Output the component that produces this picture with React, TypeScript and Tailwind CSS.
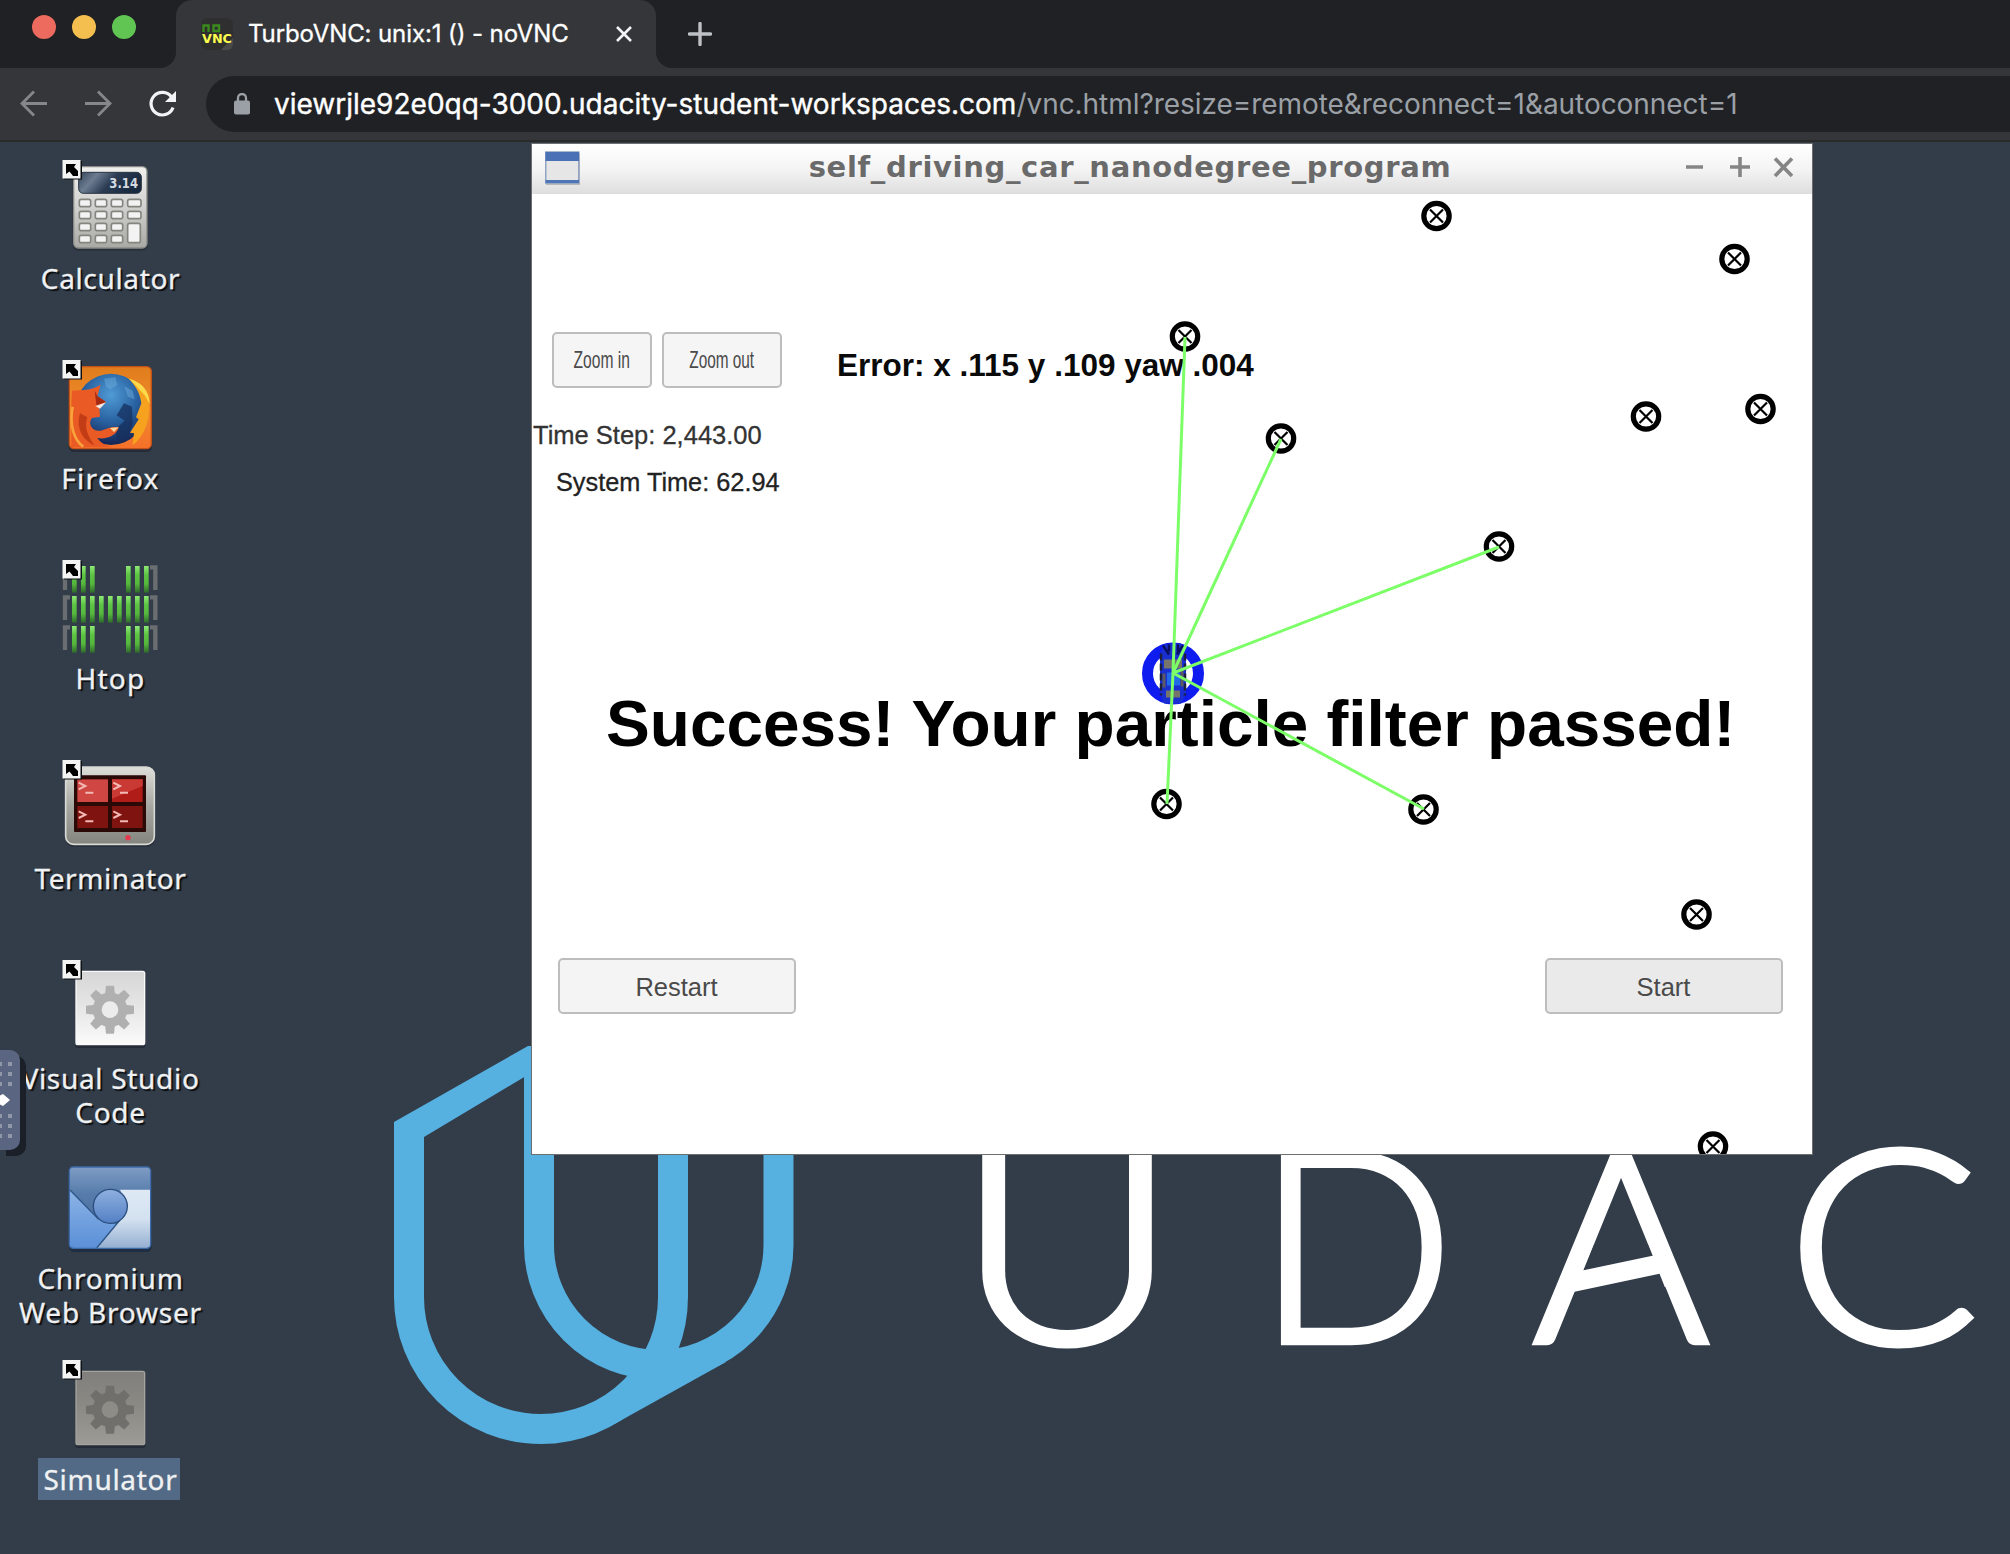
import React from "react";

const SANS = "font-['Liberation_Sans',Arial,sans-serif]";

/* ---------- Browser chrome ---------- */

function Favicon() {
  return (
    <svg width="32" height="32" viewBox="0 0 32 32" className="shrink-0">
      <defs>
        <linearGradient id="fav" x1="0" y1="0" x2="1" y2="1">
          <stop offset="0.8" stopColor="#2f2f2f" />
          <stop offset="0.82" stopColor="#4a4a4a" />
        </linearGradient>
      </defs>
      <rect width="32" height="32" rx="6" fill="url(#fav)" />
      <path d="M2.500 14V7.500H7.500V14M12.500 7.500H18V13H12.500Z" fill="none" stroke="#3b8a1d" strokeWidth="2.400" />
      <text x="1" y="24.500" fontSize="11.500" fontWeight="700" fontFamily="DejaVu Sans" fill="#ffff4d" textLength="30" lengthAdjust="spacingAndGlyphs">
        VNC
      </text>
    </svg>
  );
}

function TabStrip() {
  return (
    <div className="flex h-[68px] bg-[#202124]">
      <div className="flex w-[160px] shrink-0 gap-4 pt-[15px] pl-8">
        <span className="size-6 rounded-full bg-[#ec6a5e]" />
        <span className="size-6 rounded-full bg-[#f4bf4f]" />
        <span className="size-6 rounded-full bg-[#61c554]" />
      </div>
      <div className="w-4 bg-[#35363a]">
        <div className="h-full rounded-br-[16px] bg-[#202124]" />
      </div>
      <div className="flex w-[480px] items-center rounded-t-[16px] bg-[#35363a] pl-[25px]">
        <Favicon />
        <span className="ml-[15px] w-[368px] whitespace-nowrap font-[Inter,sans-serif] text-[24px] leading-[32px] tracking-[-0.1px] text-white [-webkit-text-stroke:0.3px_#fff]">
          TurboVNC: unix:1 () - noVNC
        </span>
        <svg width="16" height="16" viewBox="0 0 16 16">
          <path d="M1 1L15 15M15 1L1 15" stroke="#f1f3f4" strokeWidth="2.600" />
        </svg>
      </div>
      <div className="w-4 bg-[#35363a]">
        <div className="h-full rounded-bl-[16px] bg-[#202124]" />
      </div>
      <svg width="24" height="24" viewBox="0 0 24 24" className="mt-[22px] ml-4">
        <path d="M12 1.500V22.500M1.500 12H22.500" stroke="#bdc1c6" strokeWidth="3.400" strokeLinecap="round" />
      </svg>
    </div>
  );
}

function Toolbar() {
  return (
    <div className="flex h-[74px] items-center border-b-2 border-[#2a2a2b] bg-[#35363a]">
      <svg width="206" height="72" viewBox="0 0 206 72" className="shrink-0">
        <g fill="none" strokeWidth="2.800">
          <path d="M47 35.500H22M34 23.500L22 35.500L34 47.500" stroke="#85878a" />
          <path d="M85 35.500H110M98 23.500L110 35.500L98 47.500" stroke="#85878a" />
          <path d="M171.500 29A11.300 11.300 0 1 0 173 39.500" stroke="#f1f3f4" strokeWidth="3.200" />
        </g>
        <path d="M176 23V34H165Z" fill="#f1f3f4" />
      </svg>
      <div className="flex h-14 flex-1 items-center rounded-l-full bg-[#202124] pl-[28px]">
        <svg width="16" height="22" viewBox="0 0 16 22" className="mb-px shrink-0">
          <rect y="7.500" width="16" height="14" rx="2" fill="#9aa0a6" />
          <path d="M4 9V5A4 4 0 0 1 12 5V9" fill="none" stroke="#9aa0a6" strokeWidth="2.300" />
        </svg>
        <span className="ml-6 whitespace-nowrap font-[Inter,sans-serif] text-[28px] leading-[36px] text-[#9aa0a6]">
          <span className="text-white [-webkit-text-stroke:0.4px_#fff]">viewrjle92e0qq-3000.udacity-student-workspaces.com</span>
          <span className="tracking-[-0.05px]">/vnc.html?resize=remote&amp;reconnect=1&amp;autoconnect=1</span>
        </span>
      </div>
    </div>
  );
}

/* ---------- Desktop icons ---------- */

function Emblem() {
  return (
    <g>
      <rect x="64" y="161" width="18" height="18.500" fill="#0d1013" />
      <rect x="62.500" y="160" width="18" height="18.500" fill="#f4f4f4" />
      <path d="M66 164H76L74 167L78 171V176H73L69.500 171.500L66 174Z" fill="#000" />
    </g>
  );
}

function CalculatorArt() {
  const cols = [238, 286, 334];
  const rows = [178, 214, 250, 286];
  return (
    <g transform="translate(0 140) scale(0.33333)">
      <rect x="218" y="84" width="226" height="248" rx="16" fill="#20262d" opacity="0.5" />
      <rect x="221" y="80" width="220" height="244" rx="14" fill="url(#calcBody)" stroke="#8a8a88" strokeWidth="4" />
      <rect x="236" y="97" width="188" height="63" rx="14" fill="url(#calcLcd)" stroke="#2b3440" strokeWidth="3" />
      <text x="328" y="144" fontSize="40" fontWeight="700" fontFamily="DejaVu Sans" fill="#d4dae0" textLength="86" lengthAdjust="spacingAndGlyphs">
        3.14
      </text>
      <g fill="#f3f3f3" stroke="#85857f" strokeWidth="5">
        {rows.map((y) => cols.map((x) => <rect key={`${x}-${y}`} x={x} y={y} width="34" height="22" rx="6" />))}
        <rect x="383" y="178" width="40" height="22" rx="6" />
        <rect x="383" y="214" width="40" height="22" rx="6" />
        <rect x="383" y="250" width="38" height="58" rx="6" />
      </g>
    </g>
  );
}

function FirefoxArt() {
  return (
    <g transform="translate(0 -60) scale(0.33333)">
      <rect x="206" y="684" width="250" height="252" rx="16" fill="#1c222b" opacity="0.6" />
      <rect x="208" y="680" width="246" height="246" rx="14" fill="url(#ffBg)" stroke="#c4501a" strokeWidth="4" />
      <ellipse cx="333" cy="808" rx="106" ry="107" fill="url(#ffGlobe)" />
      <path d="M372 790L396 800L398 850L384 890L352 904L346 868L374 842L350 826Z" fill="#152f5c" opacity="0.75" />
      <path d="M312 716L346 712L352 736L330 748L318 740ZM372 738L398 752L404 778L384 770Z" fill="#6fb0de" opacity="0.45" />
      <path d="M384 714C420 728 448 756 447 800C448 850 430 890 398 916L402 880L390 878L416 838L408 832L424 790C420 760 408 738 384 714Z" fill="#f6a21f" />
      <path d="M388 716C424 726 448 750 449 792L434 766Z" fill="#fbd94a" />
      <path d="M216 752L250 750C270 748 286 744 302 734L292 768L318 786L298 802L300 830L276 834C262 850 276 876 302 872C322 868 330 858 356 862C352 886 318 900 292 894C302 910 320 916 336 922L214 922V790Z" fill="#ea5a24" />
      <path d="M284 752L292 768L318 786L290 802Z" fill="#a62a12" />
      <path d="M286 798L318 787L300 806Z" fill="#f6e8e0" />
      <path d="M240 820C228 860 244 900 284 916C262 888 252 860 262 832Z" fill="#c23d15" />
      <path d="M218 800C208 850 220 900 250 920" fill="none" stroke="#f9a13a" strokeWidth="8" />
      <path d="M330 864L356 862L342 876Z" fill="#fbd9a0" />
    </g>
  );
}

function HtopArt() {
  const side = [216, 243, 270, 378, 405, 432];
  const mid = [297, 324, 351];
  return (
    <g transform="translate(0 140) scale(0.33333)">
      {[78, 168, 258].map((y) => (
        <g key={y}>
          <path d={`M210 ${y + 4}H195V${y + 72}`} fill="none" stroke="#6a6e70" strokeWidth="13" />
          <path d={`M450 ${y + 4}H466V${y + 72}`} fill="none" stroke="#6a6e70" strokeWidth="13" />
          {(y === 168 ? [...side, ...mid] : side).map((x) => (
            <rect key={x} x={x} y={y} width="14" height="80" fill="url(#bar)" />
          ))}
        </g>
      ))}
    </g>
  );
}

function TerminatorArt() {
  return (
    <g transform="translate(0 -60) scale(0.33333)">
      <rect x="196" y="684" width="270" height="236" rx="26" fill="#1c222b" opacity="0.6" />
      <rect x="197" y="681" width="266" height="232" rx="24" fill="url(#termBody)" stroke="#d8d8d4" strokeWidth="5" />
      <rect x="222" y="706" width="216" height="170" rx="3" fill="#2a0907" />
      <rect x="232" y="718" width="92" height="68" fill="#cf4642" />
      <rect x="336" y="718" width="92" height="68" fill="#b01c17" />
      <path d="M336 718H428V738L336 776Z" fill="#c93a35" />
      <rect x="232" y="798" width="92" height="66" fill="#7e130f" />
      <rect x="336" y="798" width="92" height="66" fill="#7e130f" />
      <g fill="none" stroke="#f2b8b4" strokeWidth="6">
        {[232, 336].map((x) =>
          [738, 824].map((y) => (
            <path key={`${x}-${y}`} d={`M${x + 4} ${y - 10}L${x + 24} ${y}L${x + 4} ${y + 10}M${x + 24} ${y + 20}H${x + 48}`} />
          )),
        )}
      </g>
      <circle cx="384" cy="893" r="8" fill="#e8384f" />
    </g>
  );
}

const TEETH = [0, 45, 90, 135, 180, 225, 270, 315];

function GearSheet({ dim }: { dim?: boolean }) {
  const gear = dim ? "#706f6b" : "#b0b0b0";
  const hole = dim ? "#8d8c87" : "#ececec";
  return (
    <g transform="translate(0 140) scale(0.33333)">
      <rect x="226" y="98" width="210" height="226" rx="8" fill="#1c222b" opacity="0.6" />
      <rect x="228" y="94" width="206" height="220" rx="6" fill={dim ? "url(#sheetDim)" : "url(#sheet)"} stroke={dim ? "#a5a49e" : "#fafafa"} strokeWidth="4" />
      <g transform="translate(330 209)">
        {TEETH.map((a) => (
          <path key={a} transform={`rotate(${a})`} d="M-12 -72H12L15 -44H-15Z" fill={gear} />
        ))}
        <circle r="52" fill={gear} />
        <circle r="25" fill={hole} />
      </g>
    </g>
  );
}

function ChromiumArt() {
  return (
    <g transform="translate(0 -60) scale(0.33333)">
      <rect x="208" y="686" width="246" height="250" rx="14" fill="#162740" opacity="0.7" />
      <clipPath id="crClip">
        <rect x="208" y="681" width="244" height="244" rx="12" />
      </clipPath>
      <g clipPath="url(#crClip)">
        <rect x="208" y="681" width="244" height="244" fill="url(#crTop)" />
        <path d="M208 748L296 836L330 852L350 852L290 926H208Z" fill="url(#crLeft)" />
        <path d="M290 926L358 842L384 798L360 749H454V926Z" fill="url(#crRight)" />
        <path d="M210 750L296 838M290 924L360 840" stroke="#2f5688" strokeWidth="4" />
        <circle cx="331" cy="799" r="51" fill="url(#crDot)" stroke="#2c4f80" strokeWidth="4" />
      </g>
      <rect x="208" y="681" width="244" height="244" rx="12" fill="none" stroke="#3d6ba8" strokeWidth="4" />
    </g>
  );
}

function Gradient({ id, stops }: { id: string; stops: string[] }) {
  return (
    <linearGradient id={id} x1="0" y1="0" x2="0" y2="1">
      {stops.map((c, i) => (
        <stop key={i} offset={i / (stops.length - 1)} stopColor={c} />
      ))}
    </linearGradient>
  );
}

function SharedGradients() {
  return (
    <svg width="0" height="0" className="absolute">
      <defs>
        <Gradient id="calcBody" stops={["#f0f0ee", "#d0d0ce", "#a8a8a4"]} />
        <linearGradient id="calcLcd" x1="0" y1="0" x2="1" y2="0.3">
          <stop offset="0" stopColor="#33455c" />
          <stop offset="0.3" stopColor="#6d7c90" />
          <stop offset="0.6" stopColor="#2a3b52" />
          <stop offset="1" stopColor="#1a2a40" />
        </linearGradient>
        <Gradient id="ffBg" stops={["#e07c1c", "#f08c2c", "#f4702a"]} />
        <radialGradient id="ffGlobe" cx="0.5" cy="0.3" r="0.7">
          <stop offset="0" stopColor="#4f9bd6" />
          <stop offset="0.55" stopColor="#28609f" />
          <stop offset="1" stopColor="#142452" />
        </radialGradient>
        <Gradient id="bar" stops={["#8fea76", "#5cc443", "#55b83d", "#2f6a2c"]} />
        <Gradient id="termBody" stops={["#dededa", "#a8a8a2", "#85857f"]} />
        <Gradient id="sheet" stops={["#d6d6d6", "#e6e6e6", "#fbfbfb"]} />
        <Gradient id="sheetDim" stops={["#807f7b", "#8b8a85", "#9c9b95"]} />
        <Gradient id="crTop" stops={["#7f9cc4", "#567cab", "#4d719f", "#44699a"]} />
        <Gradient id="crLeft" stops={["#8db4e6", "#5a8fd8"]} />
        <Gradient id="crRight" stops={["#dfe9f5", "#d3e1f0", "#94aed0"]} />
        <Gradient id="crDot" stops={["#8fb0e0", "#5380c4"]} />
      </defs>
    </svg>
  );
}

type Shortcut = { lines: string[]; art: React.ReactNode; selected?: boolean; plain?: boolean; track: string };

const SHORTCUTS: Shortcut[] = [
  { lines: ["Calculator"], art: <CalculatorArt />, track: "tracking-[0.65px]" },
  { lines: ["Firefox"], art: <FirefoxArt />, track: "tracking-[1.3px]" },
  { lines: ["Htop"], art: <HtopArt />, track: "tracking-[1.3px]" },
  { lines: ["Terminator"], art: <TerminatorArt />, track: "tracking-[0.6px]" },
  { lines: ["Visual Studio", "Code"], art: <GearSheet />, track: "tracking-[0.7px]" },
  { lines: ["Chromium", "Web Browser"], art: <ChromiumArt />, plain: true, track: "tracking-[0.8px]" },
  { lines: ["Simulator"], art: <GearSheet dim />, selected: true, track: "tracking-[0.7px]" },
];

function DesktopIcon({ item }: { item: Shortcut }) {
  return (
    <div className="flex h-[200px] flex-col items-center">
      <svg width="100" height="100" viewBox="60 155 100 100" className="shrink-0">
        {item.art}
        {!item.plain && <Emblem />}
      </svg>
      <div
        className={
          "flex flex-col items-center whitespace-nowrap font-['Noto_Sans',sans-serif] text-[28px] leading-[34px] text-[#f0f1f2] [-webkit-text-stroke:0.3px_#f0f1f2] " +
          item.track +
          (item.selected
            ? " mt-[3px] mr-[2px] w-[142px] bg-[#526a85] pt-[4px] pb-1 pl-[3px]"
            : " mt-[6px] pl-[1px] [text-shadow:2px_2px_1px_#0b0e12]")
        }
      >
        {item.lines.map((l) => (
          <span key={l}>{l}</span>
        ))}
      </div>
    </div>
  );
}

/* ---------- Wallpaper ---------- */

function Wallpaper() {
  return (
    <svg width="2010" height="1412" viewBox="0 142 2010 1412" className="absolute top-0 left-0">
      <g fill="none" stroke="#56b0e0" strokeWidth="30">
        <path d="M409 1130V1297A132 132 0 0 0 673 1297V1100" />
        <path d="M539 1066V1245A119.750 119.750 0 0 0 778.500 1245V1100" />
      </g>
      <path d="M394 1122L528 1046H531V1073L424 1137V1140H394Z" fill="#56b0e0" />
      <path d="M614.500 1424L726 1362L700 1350L672 1362L640 1390L600 1415Z" fill="#56b0e0" />
      <g fill="#fff" stroke="#fff" strokeWidth="6.500" fontFamily="Lato" fontWeight="300" fontSize="266">
        <text x="957" y="1343" fontSize="268" textLength="220" lengthAdjust="spacingAndGlyphs">U</text>
        <text x="1257" y="1342" textLength="197" lengthAdjust="spacingAndGlyphs">D</text>
        <text x="1533" y="1342" textLength="176" lengthAdjust="spacingAndGlyphs">A</text>
        <text x="1787" y="1343" fontSize="270" textLength="192" lengthAdjust="spacingAndGlyphs">C</text>
      </g>
      <path d="M1594 1245H1648L1670 1300H1572Z" fill="#323d49" />
      <path d="M1580 1271L1656 1255L1663 1273L1571 1292.500Z" fill="#fff" />
    </svg>
  );
}

function PanelHandle() {
  return (
    <div className="absolute top-[908px] left-0 h-[100px] w-5 rounded-r-[10px] bg-[#5a6681] shadow-[6px_6px_0_#1a1f28]">
      <svg width="20" height="100" viewBox="0 0 20 100">
        {[12, 22, 32, 64, 74, 84].map((y) => (
          <g key={y} fill="#8f97a8">
            <rect x="-2" y={y} width="4" height="4" />
            <rect x="8" y={y} width="4" height="4" />
          </g>
        ))}
        <path d="M0 45.500L3 44L10 50L3 56L0 54.500Z" fill="#fff" />
      </svg>
    </div>
  );
}

/* ---------- Simulator window ---------- */

const LANDMARKS = [
  [1436.5, 216],
  [1734.5, 259],
  [1185, 336.5],
  [1281, 438.5],
  [1646, 416.5],
  [1760.5, 409],
  [1499, 546.5],
  [1166.5, 804],
  [1423.5, 809.5],
  [1696.5, 914.5],
  [1713, 1146.5],
];

const SIGHTED = [
  [1185, 337],
  [1281, 439],
  [1499, 547],
  [1167, 804],
  [1424, 809],
];

function Landmarks() {
  return (
    <svg width="1280" height="961" viewBox="532 194 1280 961" className="absolute top-0 left-0">
      {LANDMARKS.map(([x, y]) => (
        <g key={`${x}-${y}`} transform={`translate(${x} ${y})`} fill="none" stroke="#000">
          <circle r="12.700" strokeWidth="5.200" />
          <path d="M-6.500 -6.500L6.500 6.500M6.500 -6.500L-6.500 6.500" strokeWidth="2.200" />
        </g>
      ))}
      <g transform="translate(1173 673.500)">
        <circle r="25.500" fill="none" stroke="#0f1cf0" strokeWidth="11" />
        <path d="M-13 -18L-9 -29L8 -30L13 -18V20L8 30H-9L-13 20Z" fill="#1a2fd0" />
        <path d="M-12 -20V22M12 -20V22" stroke="#1b1f3a" strokeWidth="2.500" strokeDasharray="7 3" />
        <path d="M-10 -28L-4 -19M10 -28L4 -19M-4 -29V-22M5 -29V-22" stroke="#0a0f60" strokeWidth="2.500" />
        <rect x="-9" y="-14" width="18" height="9" fill="#77746c" />
        <rect x="-7" y="17" width="14" height="7" fill="#77746c" />
        <path d="M-9 0V14M9 -3V13" stroke="#5a5a60" strokeWidth="3" />
        <rect x="-6" y="-1" width="13" height="13" fill="#1f6be8" />
      </g>
    </svg>
  );
}

function SightLines() {
  return (
    <svg width="1280" height="961" viewBox="532 194 1280 961" className="absolute top-0 left-0">
      {SIGHTED.map(([x, y]) => (
        <path key={`${x}-${y}`} d={`M1173 673L${x} ${y}`} stroke="#7dff68" strokeWidth="3" />
      ))}
    </svg>
  );
}

function TitleBar() {
  return (
    <div className="flex h-[50px] items-center bg-linear-to-b from-white via-[#f4f4f4] to-[#dedede] pl-[13px]">
      <svg width="35" height="34" viewBox="0 0 35 34" className="mb-[3px] shrink-0">
        <rect x="1" y="2" width="34" height="32" fill="#b8b8b8" />
        <rect x="0.750" y="1" width="33" height="31" fill="#e6e6e6" stroke="#8fa3c4" strokeWidth="1.500" />
        <rect x="0.500" y="1" width="33.500" height="9" fill="#4a70b5" />
        <rect x="0.500" y="29" width="33.500" height="3" fill="#4f77b8" />
      </svg>
      <div className="ml-[9px] flex w-[1082px] shrink-0 justify-center font-['DejaVu_Sans',sans-serif] text-[29px] leading-[40px] font-bold tracking-[0.67px] whitespace-nowrap text-[#6a6a6a]">
        <span className="mb-[4px]">self_driving_car_nanodegree_program</span>
      </div>
      <svg width="120" height="24" viewBox="0 0 120 24" className="mb-[5px] ml-[14px] shrink-0">
        <path d="M1 12H18M45 12H65M55 2V22M90 3.500L107 21M107 3.500L90 21" stroke="#858585" strokeWidth="3.600" />
      </svg>
    </div>
  );
}

function SimButton({ label, className, text }: { label: string; className: string; text?: string }) {
  return (
    <button className={`flex h-14 items-center justify-center rounded-[5px] border-2 border-[#bdbdbd] text-[25.5px] text-[#4a4a4a] ${className}`}>
      <span className={`whitespace-nowrap ${text ?? "pt-[3px] pr-[1px]"}`}>{label}</span>
    </button>
  );
}

function SimulatorWindow() {
  return (
    <div className="absolute top-[1px] left-[531px] h-[1012px] w-[1282px] overflow-hidden border border-[#6e6e6e] bg-white">
      <TitleBar />
      <div className={`relative h-[961px] ${SANS}`}>
        <Landmarks />
        <div className="relative flex flex-col pt-[138px]">
          <div className="flex h-14 pl-[20px]">
            <SimButton label="Zoom in" className="w-[100px] bg-[#f5f5f5]" text="scale-x-[0.65] text-[24px] pr-[2px]" />
            <SimButton label="Zoom out" className="ml-[10px] w-[120px] bg-[#f5f5f5]" text="scale-x-[0.64] text-[24px]" />
            <span className="mt-[5px] ml-[55px] text-[31.5px] leading-[56px] font-bold whitespace-nowrap text-[#0a0a0a]">
              Error: x .115 y .109 yaw .004
            </span>
          </div>
          <div className="mt-[24px] pl-[1px] text-[25.5px] leading-[47px] text-[#333] [-webkit-text-stroke:0.3px_#333]">Time Step: 2,443.00</div>
          <div className="pl-[24px] text-[25.3px] leading-[47px] text-[#222] [-webkit-text-stroke:0.3px_#222]">System Time: 62.94</div>
          <div className="mt-[178px] pl-[74px] text-[65.7px] leading-[80px] font-bold whitespace-nowrap text-black">
            Success! Your particle filter passed!
          </div>
          <div className="mt-[194px] flex justify-between pr-[29px] pl-[26px]">
            <SimButton label="Restart" className="w-[238px] bg-[#f4f4f4]" />
            <SimButton label="Start" className="w-[238px] bg-[#eaeaea]" />
          </div>
        </div>
        <SightLines />
      </div>
    </div>
  );
}

export default function App() {
  return (
    <div className="flex h-[1554px] w-[2010px] flex-col overflow-hidden bg-[#323d49]">
      <TabStrip />
      <Toolbar />
      <main className="relative h-[1412px]">
        <SharedGradients />
        <Wallpaper />
        <div className="relative flex w-[220px] flex-col pt-[13px]">
          {SHORTCUTS.map((s) => (
            <DesktopIcon key={s.lines[0]} item={s} />
          ))}
        </div>
        <PanelHandle />
        <SimulatorWindow />
      </main>
    </div>
  );
}
